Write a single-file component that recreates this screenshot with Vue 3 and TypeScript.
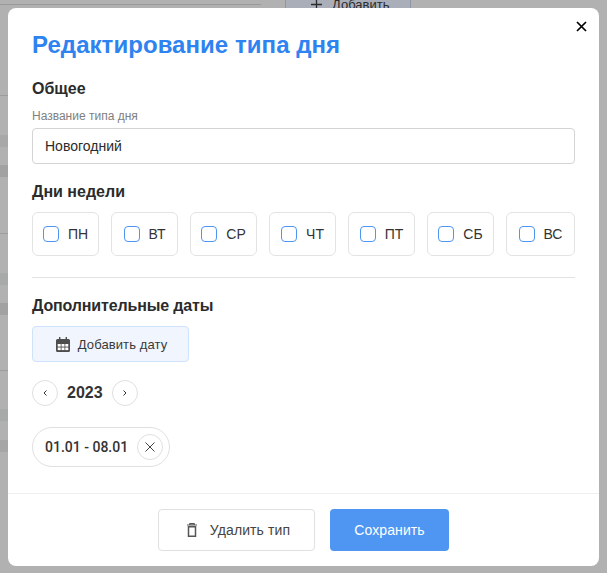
<template>
  <div class="page">
    <!-- dimmed page behind the dialog -->
    <div class="backdrop-page">
      <div class="bg-top">
        <div class="bg-line"></div>
        <div class="bg-add">
          <svg width="13" height="13" viewBox="0 0 13 13"><path d="M6.500 1v11M1 6.500h11" stroke="#2c2c2c" stroke-width="1.300" fill="none" /></svg>
          Добавить
        </div>
      </div>
      <div v-for="b in bands" :key="b.top" class="bg-band" :style="{ top: b.top + 'px', height: b.height + 'px', background: b.color }"></div>
    </div>

    <div class="overlay">
      <div class="modal" role="dialog" aria-modal="true">
        <button type="button" class="close" aria-label="Закрыть">
          <svg width="11" height="11" viewBox="0 0 11 11"><path d="M1 1l9 9M10 1l-9 9" stroke="#000" stroke-width="1.700" fill="none" /></svg>
        </button>

        <div class="body">
          <h1 class="title">Редактирование типа дня</h1>

          <h2 class="section first">Общее</h2>
          <label class="field-label">Название типа дня</label>
          <input class="field" type="text" value="Новогодний" />

          <h2 class="section days-title">Дни недели</h2>
          <div class="days">
            <label v-for="d in days" :key="d" class="day">
              <span class="box"></span>
              <span>{{ d }}</span>
            </label>
          </div>

          <div class="divider"></div>

          <h2 class="section extra-title">Дополнительные даты</h2>
          <button type="button" class="add-date">
            <svg width="14" height="15" viewBox="0 0 14 15">
              <path fill="#4d4d4d" d="M3 0h1.400v2h5.200V0H11v2h1.500A1.500 1.500 0 0 1 14 3.500V13.500A1.500 1.500 0 0 1 12.500 15h-11A1.500 1.500 0 0 1 0 13.500V3.500A1.500 1.500 0 0 1 1.500 2H3z" />
              <g fill="#fff">
                <rect x="1.700" y="7" width="3" height="2.600" />
                <rect x="5.500" y="7" width="3" height="2.600" />
                <rect x="9.300" y="7" width="3" height="2.600" />
                <rect x="1.700" y="10.500" width="3" height="2.600" />
                <rect x="5.500" y="10.500" width="3" height="2.600" />
                <rect x="9.300" y="10.500" width="3" height="2.600" />
              </g>
            </svg>
            Добавить дату
          </button>

          <div class="year-row">
            <button type="button" class="round" aria-label="Назад">
              <svg width="6" height="8" viewBox="0 0 6 8"><path d="M4.500 1.500L2 4l2.500 2.500" stroke="#333" stroke-width="1" fill="none" /></svg>
            </button>
            <span class="year">2023</span>
            <button type="button" class="round" aria-label="Вперёд">
              <svg width="6" height="8" viewBox="0 0 6 8"><path d="M1.500 1.500L4 4 1.500 6.500" stroke="#333" stroke-width="1" fill="none" /></svg>
            </button>
          </div>

          <div class="chip">
            <span>01.01 - 08.01</span>
            <button type="button" class="round chip-x" aria-label="Удалить">
              <svg width="10" height="10" viewBox="0 0 10 10"><path d="M0.500 0.500l9 9M9.500 0.500l-9 9" stroke="#444" stroke-width="1" fill="none" /></svg>
            </button>
          </div>
        </div>

        <div class="footer">
          <button type="button" class="btn btn-del">
            <svg width="10" height="14" viewBox="0 0 10 14">
              <path d="M0 2h10M2.800 2V.6h4.400V2" stroke="#555" stroke-width="1.100" fill="none" />
              <path d="M1.500 3.800h7v9.400h-7z" stroke="#555" stroke-width="1.500" fill="none" />
            </svg>
            Удалить тип
          </button>
          <button type="button" class="btn btn-save">Сохранить</button>
        </div>
      </div>
    </div>
  </div>
</template>

<script setup lang="ts">
const days: string[] = ['ПН', 'ВТ', 'СР', 'ЧТ', 'ПТ', 'СБ', 'ВС']

// rows of the page under the overlay, only their left ends show
const bands = [
  { top: 95, height: 1, color: '#9c9c9c' },
  { top: 135, height: 12, color: '#a8a8a8' },
  { top: 165, height: 12, color: '#a2a2a2' },
  { top: 233, height: 1, color: '#9c9c9c' },
  { top: 273, height: 12, color: '#a8aaaa' },
  { top: 303, height: 12, color: '#a2a2a2' },
  { top: 370, height: 1, color: '#9c9c9c' },
  { top: 409, height: 12, color: '#a8aaaa' },
  { top: 440, height: 12, color: '#a6a6a6' }
]
</script>

<style>
html,
body {
  margin: 0;
  height: 100%;
  overflow: hidden;
}
</style>

<style scoped>
.page {
  position: relative;
  width: 607px;
  height: 573px;
  overflow: hidden;
  font-family: "Liberation Sans", Arial, sans-serif;
  color: #2b2b2b;
}

.backdrop-page {
  position: relative;
  height: 100%;
  background: #b1b1b1;
}

.bg-band {
  position: absolute;
  left: 0;
  width: 20px;
}

.bg-top {
  display: flex;
  height: 9px;
}

.bg-line {
  width: 261px;
  height: 1px;
  margin-top: 4px;
  background: #9a9a9a;
}

.bg-add {
  display: flex;
  align-items: center;
  gap: 9px;
  flex: none;
  width: 126px;
  height: 9px;
  margin-left: 24px;
  padding-left: 24px;
  box-sizing: border-box;
  background: #a9aeb8;
  border-right: 1px solid #8f96a6;
  border-left: 1px solid #8f96a6;
  font-size: 13px;
}

.overlay {
  position: absolute;
  inset: 0;
  padding: 8px 8px 7px 8px;
  box-sizing: border-box;
}

.modal {
  position: relative;
  display: flex;
  flex-direction: column;
  height: 100%;
  background: #fff;
  border-radius: 8px;
}

.close {
  position: absolute;
  top: 13px;
  right: 12px;
  display: flex;
  padding: 0;
  border: none;
  background: none;
}

.body {
  flex: 1;
  padding: 22px 24px 0;
}

.title {
  margin: 0;
  font-size: 24px;
  line-height: 30px;
  font-weight: 700;
  letter-spacing: 0.05px;
  color: #2e83f0;
}

.section {
  margin: 0;
  font-size: 16px;
  line-height: 20px;
  font-weight: 700;
  color: #2b2b2b;
}

.section.first {
  margin-top: 19px;
}

.extra-title {
  letter-spacing: -0.15px;
}

.field-label {
  display: block;
  margin-top: 10px;
  font-size: 12px;
  line-height: 14px;
  color: #808080;
}

.field {
  display: block;
  width: 100%;
  height: 36px;
  margin-top: 5px;
  padding: 0 12px;
  box-sizing: border-box;
  border: 1px solid #d4d4d4;
  border-radius: 4px;
  font: 14px "Liberation Sans", Arial, sans-serif;
  color: #2b2b2b;
  outline: none;
}

.days-title {
  margin-top: 18px;
}

.days {
  display: flex;
  gap: 12px;
  margin-top: 10px;
}

.day {
  display: flex;
  align-items: center;
  justify-content: center;
  gap: 9px;
  width: 67px;
  height: 44px;
  box-sizing: border-box;
  border: 1px solid #e3e3e3;
  border-radius: 6px;
  font-size: 14px;
  color: #333;
}

.day:last-child {
  width: 69px;
}

.box {
  width: 16px;
  height: 16px;
  box-sizing: border-box;
  border: 1px solid #4f96f3;
  border-radius: 4px;
}

.divider {
  height: 1px;
  margin: 21px 0 18px;
  background: #e2e2e2;
}

.add-date {
  display: flex;
  align-items: center;
  justify-content: center;
  gap: 8px;
  width: 157px;
  height: 36px;
  margin-top: 10px;
  padding: 0 0 0 2px;
  border: 1px solid #cfe2fb;
  border-radius: 4px;
  background: #f1f6fe;
  font: 13px "Liberation Sans", Arial, sans-serif;
  letter-spacing: 0.1px;
  color: #3a3a3a;
}

.year-row {
  display: flex;
  align-items: center;
  gap: 9px;
  margin-top: 18px;
}

.round {
  display: flex;
  flex: none;
  align-items: center;
  justify-content: center;
  width: 26px;
  height: 26px;
  padding: 0;
  box-sizing: border-box;
  border: 1px solid #e0e0e0;
  border-radius: 50%;
  background: #fff;
}

.year {
  font-size: 16px;
  font-weight: 700;
  color: #333;
}

.chip {
  display: inline-flex;
  align-items: center;
  gap: 9px;
  height: 40px;
  margin-top: 21px;
  padding: 0 6px 0 12px;
  box-sizing: border-box;
  border: 1px solid #e0e0e0;
  border-radius: 20px;
  font-family: Roboto, "Liberation Sans", sans-serif;
  font-size: 14px;
  font-weight: 500;
  color: #333;
}

.footer {
  display: flex;
  justify-content: center;
  gap: 15px;
  height: 73px;
  padding-top: 15px;
  box-sizing: border-box;
  border-top: 1px solid #efefef;
}

.btn {
  display: flex;
  align-items: center;
  justify-content: center;
  height: 42px;
  padding: 0;
  border-radius: 4px;
  font: 14px "Liberation Sans", Arial, sans-serif;
  letter-spacing: 0.1px;
}

.btn-del {
  gap: 13px;
  width: 157px;
  padding-left: 4px;
  border: 1px solid #e0e0e0;
  background: #fff;
  color: #444;
}

.btn-save {
  width: 119px;
  border: none;
  background: #4f96f3;
  color: #fff;
}
</style>
